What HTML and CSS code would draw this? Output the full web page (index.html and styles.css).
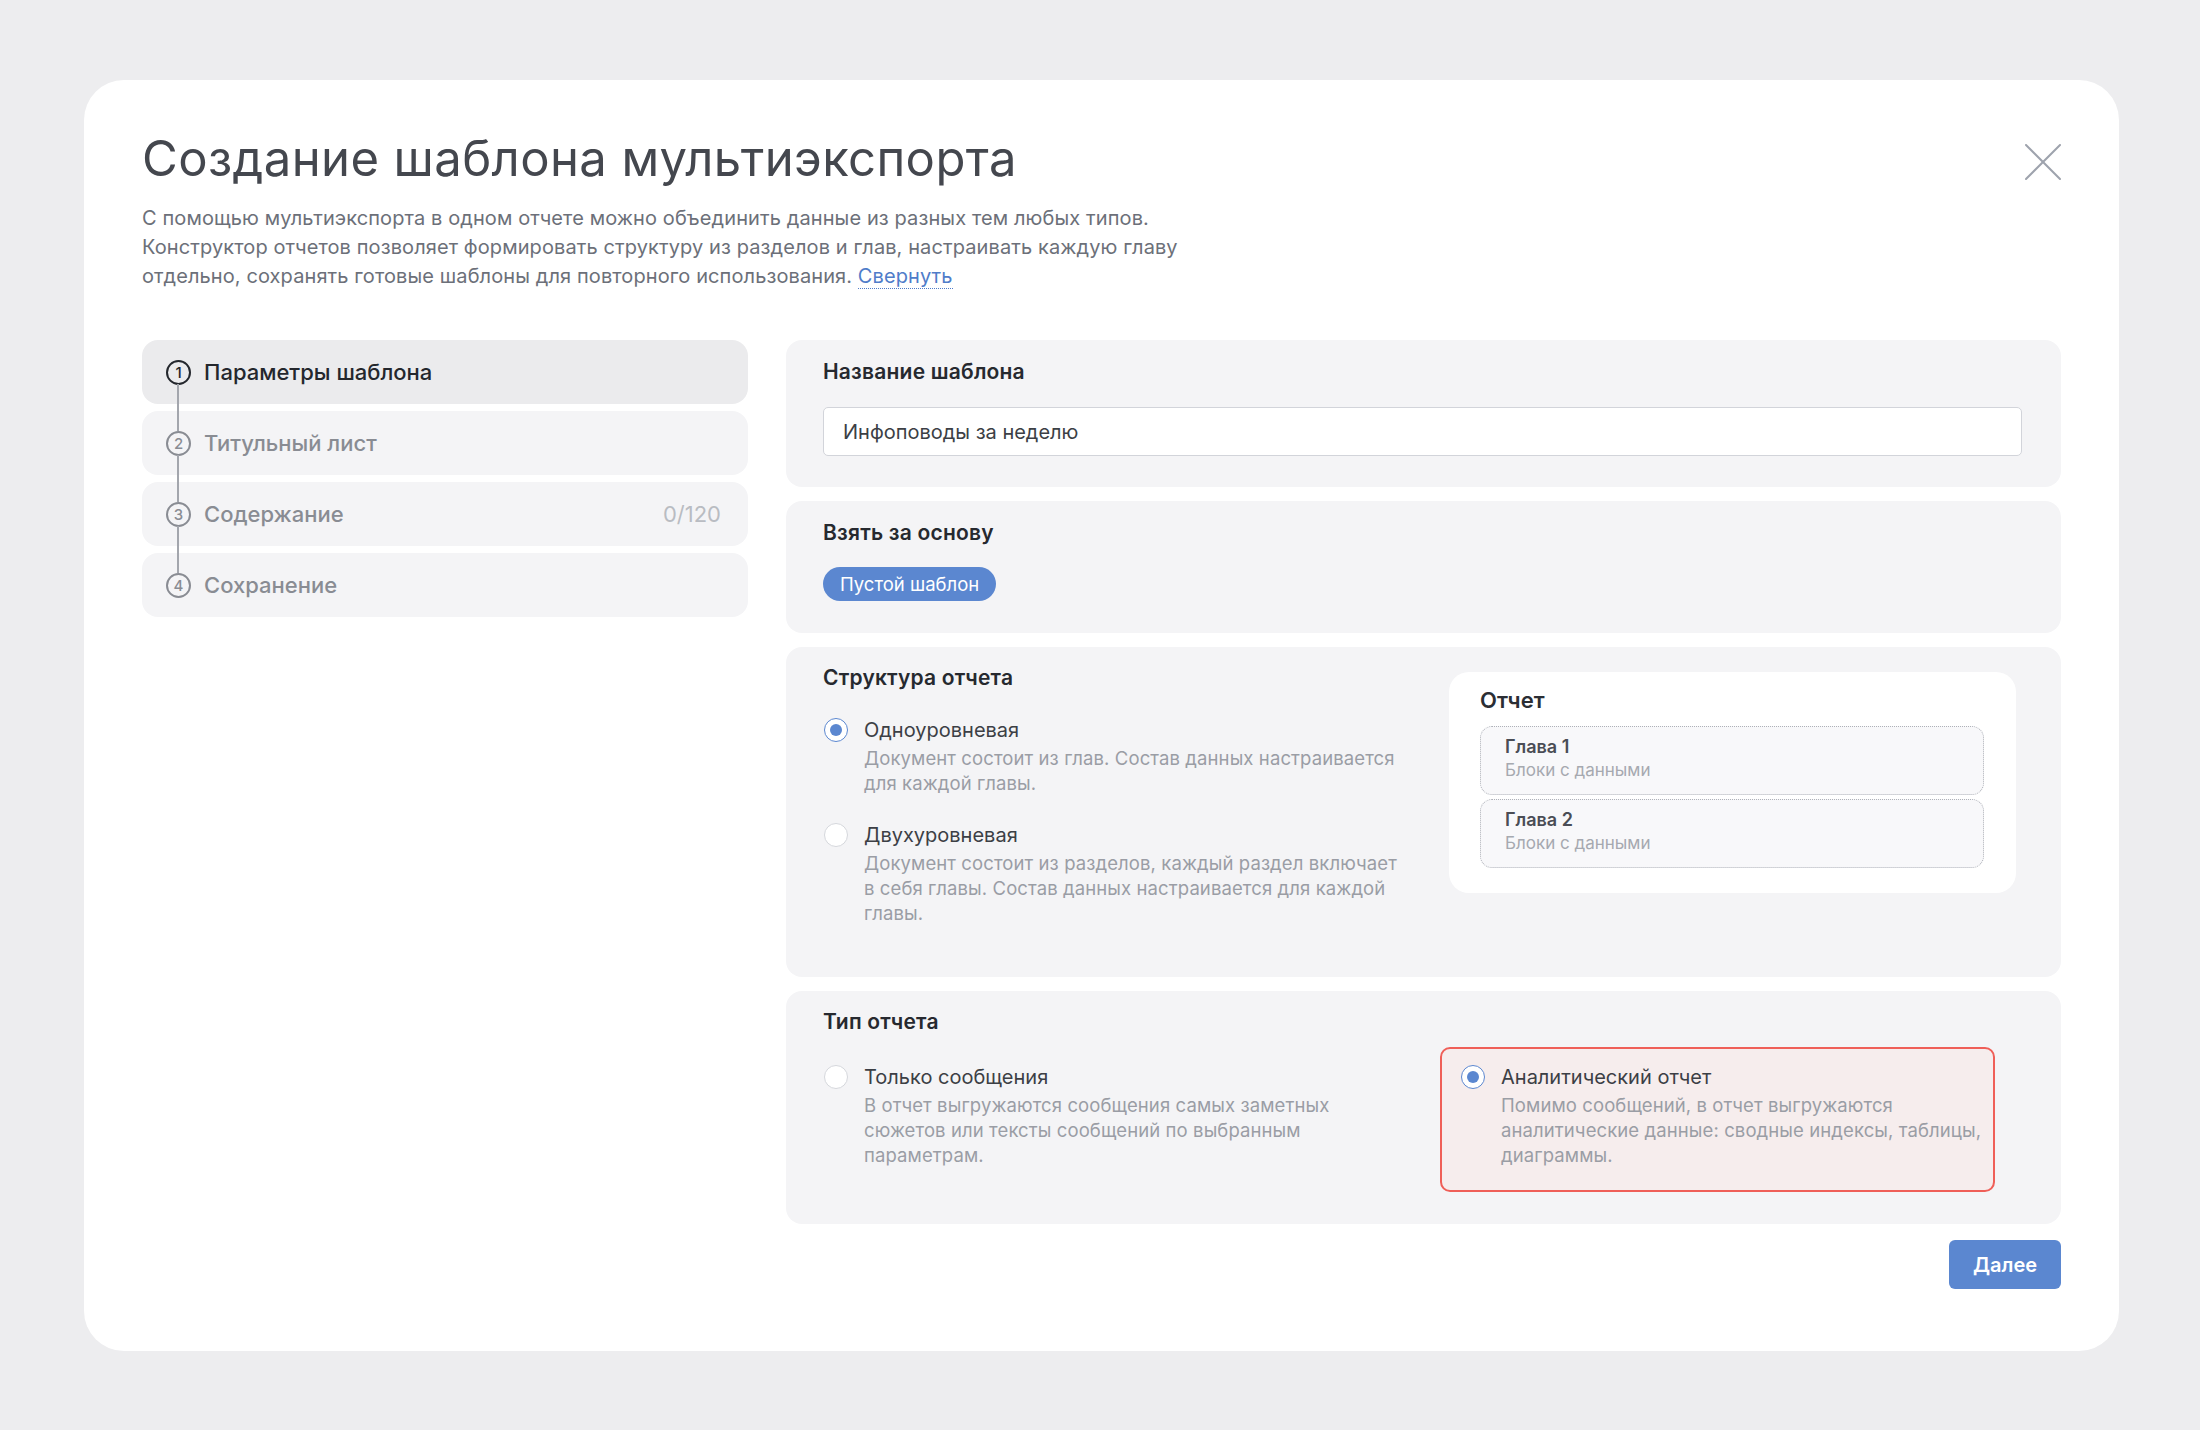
FILE: index.html
```html
<!DOCTYPE html>
<html lang="ru">
<head>
    <meta charset="UTF-8">
    <meta name="viewport" content="width=device-width, initial-scale=1.0">
    <title>Создание шаблона мультиэкспорта</title>
    <link rel="stylesheet" href="styles.css">
</head>
<body>
    <div class="modal">
        <div class="modal-head">
            <h1>Создание шаблона мультиэкспорта</h1>
            <button class="close" aria-label="Закрыть">
                <svg width="36" height="36" viewBox="0 0 36 36" fill="none">
                    <path d="M1 1L35 35M35 1L1 35" stroke="#9ea3ad" stroke-width="2" stroke-linecap="round"/>
                </svg>
            </button>
        </div>
        <p class="intro">
            С помощью мультиэкспорта в одном отчете можно объединить данные из разных тем любых типов.
            Конструктор отчетов позволяет формировать структуру из разделов и глав, настраивать каждую главу
            отдельно, сохранять готовые шаблоны для повторного использования. <a href="#" class="link">Свернуть</a>
        </p>

        <div class="layout">
            <ul class="steps">
                <li class="step active"><span class="num">1</span>Параметры шаблона</li>
                <li class="step"><span class="num">2</span>Титульный лист</li>
                <li class="step"><span class="num">3</span>Содержание<span class="count">0/120</span></li>
                <li class="step"><span class="num">4</span>Сохранение</li>
            </ul>

            <div class="content">
                <section class="panel name">
                    <h2>Название шаблона</h2>
                    <input type="text" class="field" value="Инфоповоды за неделю">
                </section>

                <section class="panel base">
                    <h2>Взять за основу</h2>
                    <span class="chip">Пустой шаблон</span>
                </section>

                <section class="panel structure">
                    <div>
                        <h2>Структура отчета</h2>
                        <div class="options">
                            <label class="option">
                                <span class="radio checked"></span>
                                <span>
                                    <span class="option-title">Одноуровневая</span>
                                    <span class="option-text">Документ состоит из глав. Состав данных настраивается для каждой главы.</span>
                                </span>
                            </label>
                            <label class="option">
                                <span class="radio"></span>
                                <span>
                                    <span class="option-title">Двухуровневая</span>
                                    <span class="option-text">Документ состоит из разделов, каждый раздел включает в себя главы. Состав данных настраивается для каждой главы.</span>
                                </span>
                            </label>
                        </div>
                    </div>
                    <div class="preview">
                        <div class="preview-title">Отчет</div>
                        <div class="chapter">
                            <div class="chapter-name">Глава 1</div>
                            <div class="chapter-sub">Блоки с данными</div>
                        </div>
                        <div class="chapter">
                            <div class="chapter-name">Глава 2</div>
                            <div class="chapter-sub">Блоки с данными</div>
                        </div>
                    </div>
                </section>

                <section class="panel kind">
                    <h2>Тип отчета</h2>
                    <div class="type-grid">
                        <label class="option type">
                            <span class="radio"></span>
                            <span>
                                <span class="option-title">Только сообщения</span>
                                <span class="option-text">В отчет выгружаются сообщения самых заметных сюжетов или тексты сообщений по выбранным параметрам.</span>
                            </span>
                        </label>
                        <label class="option type error">
                            <span class="radio checked"></span>
                            <span>
                                <span class="option-title">Аналитический отчет</span>
                                <span class="option-text">Помимо сообщений, в отчет выгружаются аналитические данные: сводные индексы, таблицы, диаграммы.</span>
                            </span>
                        </label>
                    </div>
                </section>

                <div class="actions">
                    <button class="btn">Далее</button>
                </div>
            </div>
        </div>
    </div>
</body>
</html>
```

FILE: styles.css
```css
body {
    font-family: Inter, "Noto Sans", sans-serif;
    background-color: #ededef;
    margin: 0;
    padding: 80px 81px 79px 84px;
    color: #2b2e34;
}
.modal {
    background: #fff;
    border-radius: 40px;
    padding: 50px 58px 62px;
}
.modal-head {
    display: flex;
    justify-content: space-between;
    align-items: flex-start;
}
h1 {
    margin: 0;
    font-size: 49px;
    line-height: 58px;
    font-weight: 400;
    color: #44474e;
    letter-spacing: 0.4px;
}
.close {
    border: none;
    background: none;
    padding: 0;
    margin-top: 14px;
    width: 36px;
    height: 36px;
    cursor: pointer;
}
.intro {
    margin: 16px 0 0;
    max-width: 1070px;
    font-size: 20px;
    line-height: 29px;
    letter-spacing: 0.1px;
    color: #6c7079;
}
.link {
    color: #4f7cc9;
    text-decoration: none;
    border-bottom: 1px dotted #4f7cc9;
}
.layout {
    display: grid;
    grid-template-columns: 606px 1fr;
    gap: 38px;
    margin-top: 49px;
}

/* steps */
.steps {
    list-style: none;
    margin: 0;
    padding: 0;
    display: flex;
    flex-direction: column;
    gap: 7px;
}
.step {
    position: relative;
    display: flex;
    align-items: center;
    height: 64px;
    padding: 0 27px 0 24px;
    background: #f4f4f6;
    border-radius: 16px;
    font-size: 22px;
    font-weight: 500;
    color: #898c93;
}
.step.active {
    background: #ebebed;
    color: #24272d;
}
.step:not(:last-child)::after {
    content: "";
    position: absolute;
    z-index: 1;
    left: 35px;
    top: 44px;
    width: 2px;
    height: 47px;
    background: #a3a6ad;
}
.num {
    box-sizing: border-box;
    width: 25px;
    height: 25px;
    margin-right: 13px;
    border: 2px solid #898c93;
    border-radius: 50%;
    display: flex;
    align-items: center;
    justify-content: center;
    font-size: 15px;
    font-weight: 500;
    line-height: 1;
}
.step.active .num {
    border-color: #24272d;
}
.count {
    margin-left: auto;
    font-weight: 400;
    color: #b9bcc2;
}

/* panels */
.content {
    display: flex;
    flex-direction: column;
    gap: 14px;
}
.panel {
    background: #f4f4f6;
    border-radius: 16px;
    padding: 18px 39px 31px 37px;
}
h2 {
    margin: 0;
    font-size: 21px;
    line-height: 28px;
    font-weight: 600;
    letter-spacing: 0.2px;
    color: #26292f;
}
.field {
    display: block;
    box-sizing: border-box;
    width: 100%;
    height: 49px;
    margin-top: 21px;
    padding: 0 19px;
    border: 1px solid #d2d4da;
    border-radius: 5px;
    background: #fff;
    font-family: inherit;
    font-size: 20px;
    color: #3c3f45;
}
.chip {
    display: inline-block;
    margin-top: 20px;
    height: 34px;
    line-height: 34px;
    padding: 0 17px;
    border-radius: 17px;
    background: #5b87d0;
    color: #fff;
    font-size: 18.5px;
}
.base {
    padding-bottom: 32px;
}
.structure {
    display: grid;
    grid-template-columns: 1fr 567px;
    align-items: start;
    padding: 17px 45px 51px 37px;
}
.options {
    display: flex;
    flex-direction: column;
    gap: 26px;
    margin-top: 25px;
}
.option {
    display: flex;
    align-items: flex-start;
    gap: 16px;
}
.radio {
    flex: none;
    box-sizing: border-box;
    width: 24px;
    height: 24px;
    margin: 1px 0 0 1px;
    border-radius: 50%;
    border: 1.5px solid #d5d7dc;
    background: #fff;
    display: flex;
    align-items: center;
    justify-content: center;
}
.radio.checked {
    border-color: #5b87d0;
}
.radio.checked::before {
    content: "";
    width: 12px;
    height: 12px;
    border-radius: 50%;
    background: #5b87d0;
}
.option-title {
    display: block;
    font-size: 20px;
    line-height: 26px;
    color: #3c3f45;
}
.option-text {
    display: block;
    max-width: 540px;
    margin-top: 3px;
    font-size: 18.5px;
    line-height: 25px;
    letter-spacing: 0.1px;
    color: #9a9da5;
}
.preview {
    margin-top: 8px;
    background: #fff;
    border-radius: 20px;
    padding: 16px 32px 25px 31px;
}
.preview-title {
    font-size: 22px;
    line-height: 24px;
    font-weight: 600;
    color: #2b2e34;
    margin-bottom: 14px;
}
.chapter {
    background: #f8f8fa;
    border: 1px dotted #aeb1b8;
    border-radius: 12px;
    padding: 9px 24px 12px;
}
.chapter + .chapter {
    margin-top: 4px;
}
.chapter-name {
    font-size: 18px;
    line-height: 22px;
    font-weight: 600;
    color: #4a4d55;
}
.chapter-sub {
    font-size: 17px;
    line-height: 24px;
    color: #a6a9b0;
}
.kind {
    padding: 17px 39px 32px 37px;
}
.type-grid {
    display: grid;
    grid-template-columns: 1fr 555px;
    margin-top: 11px;
    margin-right: 27px;
}
.type {
    padding-top: 17px;
}
.type .option-text {
    max-width: 490px;
}
.type.error {
    border: 2px solid #ef5f58;
    border-radius: 10px;
    background: #f6eded;
    padding: 15px 4px 22px 18px;
}
.actions {
    display: flex;
    justify-content: flex-end;
    margin-top: 2px;
}
.btn {
    height: 49px;
    width: 112px;
    border: none;
    border-radius: 6px;
    background: #5b87d0;
    color: #fff;
    font-family: inherit;
    font-size: 20px;
    font-weight: 600;
    cursor: pointer;
}
```
